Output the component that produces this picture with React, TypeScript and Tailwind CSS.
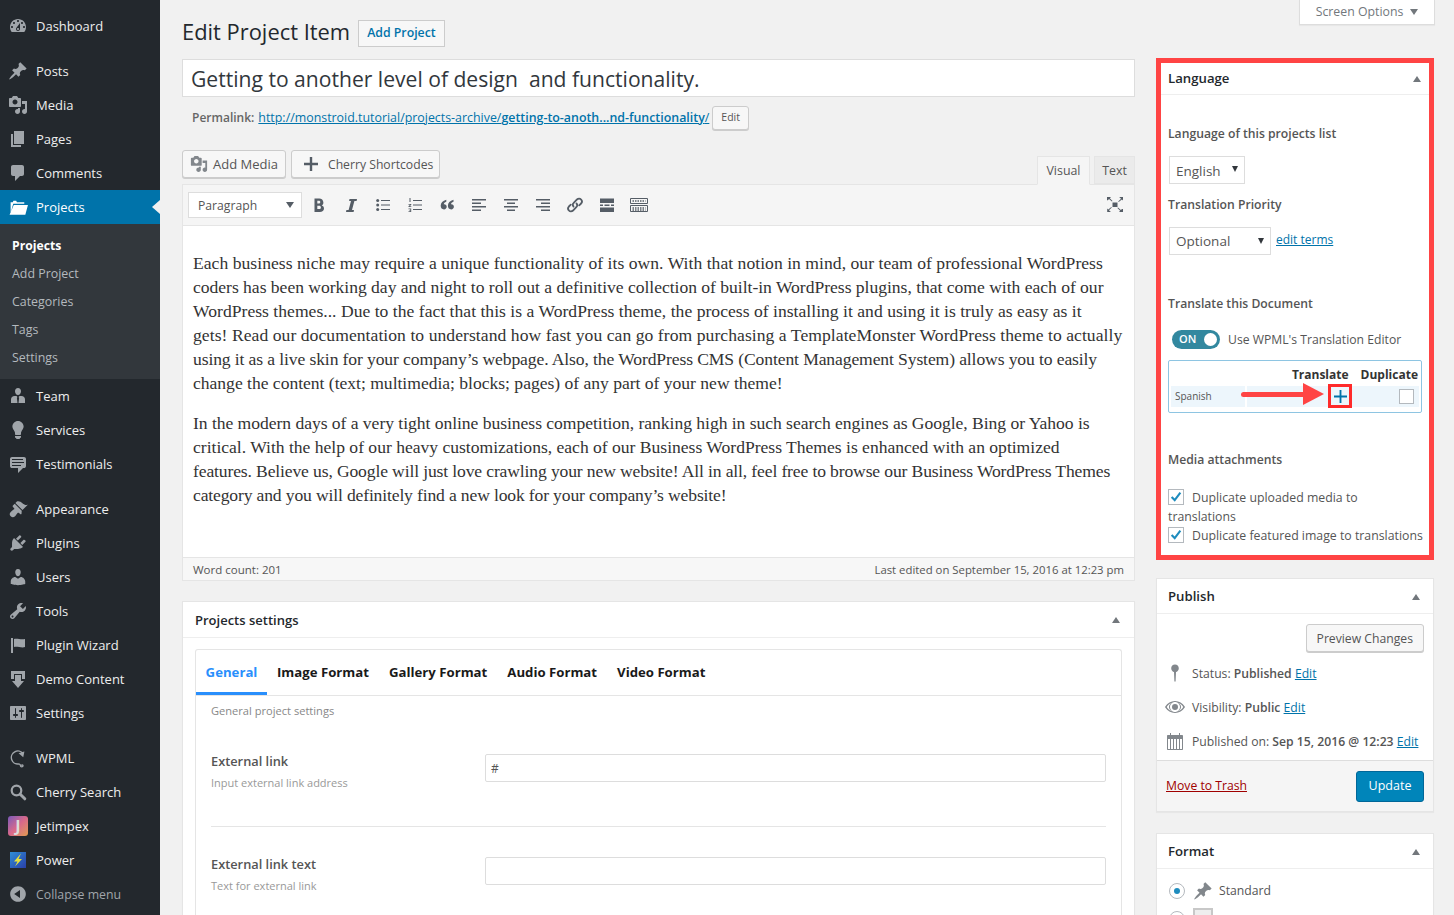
import React from "react";

const d: Record<string, string> = {
  dashboard: "M3.76 16h12.48c1.1-1.37 1.76-3.11 1.76-5 0-4.42-3.58-8-8-8s-8 3.58-8 8c0 1.89.66 3.63 1.76 5zM10 4c.55 0 1 .45 1 1s-.45 1-1 1-1-.45-1-1 .45-1 1-1zM6 6c.55 0 1 .45 1 1s-.45 1-1 1-1-.45-1-1 .45-1 1-1zm8 0c.55 0 1 .45 1 1s-.45 1-1 1-1-.45-1-1 .45-1 1-1zm-5.37 5.55L12 7v6c0 1.1-.9 2-2 2s-2-.9-2-2c0-.57.24-1.08.63-1.45zM4 10c.55 0 1 .45 1 1s-.45 1-1 1-1-.45-1-1 .45-1 1-1zm12 0c.55 0 1 .45 1 1s-.45 1-1 1-1-.45-1-1 .45-1 1-1zm-5 3c0-.55-.45-1-1-1s-1 .45-1 1 .45 1 1 1 1-.45 1-1z",
  post: "M10.44 3.02l1.82-1.82 6.36 6.35-1.83 1.82c-1.05-.68-2.48-.57-3.41.36l-.75.75c-.92.93-1.04 2.35-.35 3.41l-1.83 1.82-2.41-2.41-2.8 2.79c-.42.42-3.38 2.71-3.8 2.29s1.86-3.39 2.28-3.81l2.79-2.79L4.1 9.36l1.83-1.82c1.05.69 2.48.57 3.4-.36l.75-.75c.93-.92 1.05-2.35.36-3.41z",
  media: "M13 11V4c0-.55-.45-1-1-1h-1.67L9 1H5L3.67 3H2c-.55 0-1 .45-1 1v7c0 .55.45 1 1 1h10c.55 0 1-.45 1-1zM7 4.5c1.38 0 2.5 1.12 2.5 2.5S8.38 9.5 7 9.5 4.5 8.38 4.5 7 5.62 4.5 7 4.5zM14 6h5v10.5c0 1.38-1.12 2.5-2.5 2.5S14 17.88 14 16.5s1.12-2.5 2.5-2.5c.17 0 .34.02.5.05V9h-3V6zm-4 8.05V13h2v3.5c0 1.38-1.12 2.5-2.5 2.5S7 17.88 7 16.5 8.12 14 9.5 14c.17 0 .34.02.5.05z",
  page: "M6 15V2h10v13H6zm-1 1h8v2H3V5h2v11z",
  comments: "M5 2h9c1.1 0 2 .9 2 2v7c0 1.1-.9 2-2 2h-2l-5 5v-5H5c-1.1 0-2-.9-2-2V4c0-1.1.9-2 2-2z",
  folder: "M2.500 5h2l.7-1.500h2.600L8.500 5h7v1.500H5L2.500 15zM5.500 7.500H19L16.500 17H1.500z",
  team: "M10 2c1.900 0 3 1.500 3 3.200S11.900 9 10 9 7 7 7 5.200 8.100 2 10 2zM6.500 10h2l.9 1-.5 1 .6 5H3v-3.500c0-2 1.500-3.500 3.500-3.500zm7 0c2 0 3.500 1.500 3.500 3.500V17h-6.500l.6-5-.5-1 .9-1z",
  bulb: "M10 1c3.11 0 5.63 2.52 5.63 5.62 0 1.84-2.03 4.58-2.03 4.58-.33.44-.6 1.25-.6 1.8v1c0 .55-.45 1-1 1H8c-.55 0-1-.45-1-1v-1c0-.55-.27-1.36-.6-1.8 0 0-2.02-2.74-2.02-4.58C4.38 3.52 6.89 1 10 1zM7 16.87V16h6v.87c0 .62-.13 1.13-.75 1.13H12c0 .62-.4 1-1.02 1h-2c-.61 0-.98-.38-.98-1h-.25c-.62 0-.75-.51-.75-1.13z",
  testimonial: "M4 3h12c.55 0 1.02.2 1.41.59S18 4.45 18 5v7c0 .55-.2 1.02-.59 1.41S16.55 14 16 14h-1l-5 5v-5H4c-.55 0-1.02-.2-1.41-.59S2 12.55 2 12V5c0-.55.2-1.02.59-1.41S3.45 3 4 3zm11 2H4v1h11V5zm1 3H4v1h12V8zm-3 3H4v1h9v-1z",
  appearance: "M14.48 11.06L7.41 3.99l1.5-1.5c.5-.56 2.3-.47 3.51.32 1.21.8 1.43 1.28 2.91 2.1 1.18.64 2.45 1.26 4.45.85zm-.71.71L6.7 4.78l-1.77 1.7c-.39.39-.39 1.02 0 1.41l1.06 1.06c.39.39.39 1.03 0 1.42-.6.6-1.43 1.11-2.21 1.69-.35.26-.7.53-1.01.84-1.43 1.43-1.4 3.04-.07 4.37s2.94 1.36 4.37-.07c.31-.31.58-.66.84-1.01.58-.78 1.09-1.61 1.69-2.21.39-.39 1.03-.39 1.42 0l1.06 1.06c.39.39 1.02.39 1.41 0z",
  plugins: "M13.11 4.36L9.87 7.6 8 5.73l3.24-3.24c.35-.34 1.05-.2 1.56.32.52.51.66 1.21.31 1.55zm-8 1.77l.91-1.12 9.01 9.01-1.19.84c-.71.71-2.63 1.16-3.82 1.16H6.14L4.9 17.26c-.59.59-1.54.59-2.12 0-.59-.58-.59-1.53 0-2.12l1.24-1.24v-3.88c0-1.13.4-3.19 1.09-3.89zm7.26 3.97l3.24-3.24c.34-.35 1.04-.21 1.55.31.52.51.66 1.21.31 1.55l-3.24 3.25z",
  users: "M10 9.25c-2.27 0-2.73-3.44-2.73-3.44C7 4.02 7.82 2 9.97 2c2.16 0 2.98 2.02 2.71 3.81 0 0-.41 3.44-2.68 3.44zm0 2.57L12.72 10c2.39 0 4.52 2.33 4.52 4.53v2.49s-3.65 1.13-7.24 1.13c-3.65 0-7.24-1.13-7.24-1.13v-2.49c0-2.25 1.94-4.48 4.47-4.48z",
  tools: "M16.68 9.77c-1.34 1.34-3.3 1.67-4.95.99l-5.41 6.52c-.99.99-2.59.99-3.58 0s-.99-2.59 0-3.57l6.52-5.42c-.68-1.65-.35-3.61.99-4.95 1.28-1.28 3.12-1.62 4.72-1.06l-2.89 2.89 2.82 2.82 2.86-2.87c.53 1.58.18 3.39-1.08 4.65zM3.81 16.21c.4.39 1.04.39 1.43 0 .4-.4.4-1.04 0-1.43-.39-.4-1.03-.4-1.43 0-.39.39-.39 1.03 0 1.43z",
  flag: "M5 18V3H3v15h2zm1-6V4c3-1 7 1 11 0v8c-3 1.27-8-1-11 0z",
  demo: "M3 2h14v8h-3V5H6v5H3zM7 6h6v6h3l-6 7-6-7h3z",
  settings: "M18 16V4c0-.55-.45-1-1-1H3c-.55 0-1 .45-1 1v12c0 .55.45 1 1 1h14c.55 0 1-.45 1-1zM8 11h1c.55 0 1 .45 1 1s-.45 1-1 1H8v1.5c0 .28-.22.5-.5.5s-.5-.22-.5-.5V13H6c-.55 0-1-.45-1-1s.45-1 1-1h1V5.5c0-.28.22-.5.5-.5s.5.22.5.5V11zm5-2h-1c-.55 0-1-.45-1-1s.45-1 1-1h1V5.5c0-.28.22-.5.5-.5s.5.22.5.5V7h1c.55 0 1 .45 1 1s-.45 1-1 1h-1v5.5c0 .28-.22.5-.5.5s-.5-.22-.5-.5V9z",
  collapse: "M10 2.16c4.33 0 7.84 3.51 7.84 7.84s-3.51 7.84-7.84 7.84S2.16 14.33 2.16 10 5.71 2.16 10 2.16zm2 11.72V6.12L6.18 9.97z",
  pin: "M10 1.500c2.200 0 3.800 1.600 3.800 3.700S12.300 8.700 11 9l-.4 9.500H9.400L9 9C7.700 8.700 6.200 7.300 6.200 5.200S7.800 1.500 10 1.500z",
  eye: "M19.700 9.400C17.700 6 14 3.900 10 3.900S2.300 6 .3 9.400L0 10l.3.600c2 3.400 5.700 5.500 9.700 5.500s7.700-2.100 9.700-5.500l.3-.600-.3-.600zM10 5c2.800 0 5 2.200 5 5s-2.200 5-5 5-5-2.200-5-5 2.200-5 5-5zm0 2a3 3 0 100 6 3 3 0 000-6zM1.700 10C3 7.900 4.900 6.400 7.100 5.600 5.200 6.600 4 8.200 4 10s1.200 3.400 3.100 4.400C4.900 13.600 3 12.100 1.700 10zm11.200 4.400C14.800 13.400 16 11.800 16 10s-1.200-3.400-3.100-4.400c2.200.8 4.100 2.300 5.400 4.400-1.300 2.100-3.200 3.600-5.400 4.400z",
  calendar: "M3 4h2V2h1v2h8V2h1v2h2c.6 0 1 .4 1 1v13c0 .6-.4 1-1 1H3c-.6 0-1-.4-1-1V5c0-.6.4-1 1-1zm0 4v10h2V8zm3 0v10h2V8zm3 0v10h2V8zm3 0v10h2V8zm3 0v10h2V8z",
};

function I({ n, className = "" }: { n: string; className?: string }) {
  return (
    <svg viewBox="0 0 20 20" className={className} fill="currentColor">
      <path d={d[n]} />
    </svg>
  );
}

function MenuItem({ icon, label, active = false }: { icon: React.ReactNode; label: string; active?: boolean }) {
  return (
    <div className={`relative flex h-[34px] items-center ${active ? "bg-[#0073aa] text-white" : "text-[#eeeeee]"}`}>
      <div className={`flex w-[36px] shrink-0 items-center justify-center ${active ? "text-white" : "text-[#a0a5aa]"}`}>{icon}</div>
      <span className="text-[13px] leading-[18px]">{label}</span>
      {active && <div className="absolute right-0 top-[10px] h-0 w-0 border-y-[7px] border-r-[8px] border-y-transparent border-r-[#f1f1f1]" />}
    </div>
  );
}

const ic = "h-[20px] w-[20px]";

function Sidebar() {
  const top = (n: string) => <I n={n} className={ic} />;
  return (
    <aside className="h-[915px] w-[160px] shrink-0 overflow-hidden bg-[#23282d] pt-[9px]">
      <MenuItem icon={top("dashboard")} label="Dashboard" />
      <div className="h-[11px]" />
      <MenuItem icon={top("post")} label="Posts" />
      <MenuItem icon={top("media")} label="Media" />
      <MenuItem icon={top("page")} label="Pages" />
      <MenuItem icon={top("comments")} label="Comments" />
      <MenuItem icon={<I n="folder" className="h-[21px] w-[21px]" />} label="Projects" active />
      <div className="flex flex-col bg-[#32373c] pb-[7px] pt-[8px] text-[12.4px]">
        <div className="flex h-[28px] items-center pl-[12px] text-[12.2px] font-bold text-white">Projects</div>
        {["Add Project", "Categories", "Tags", "Settings"].map((s) => (
          <div key={s} className="flex h-[28px] items-center pl-[12px] text-[#b4b9be]">{s}</div>
        ))}
      </div>
      <MenuItem icon={top("team")} label="Team" />
      <MenuItem icon={top("bulb")} label="Services" />
      <MenuItem icon={top("testimonial")} label="Testimonials" />
      <div className="h-[11px]" />
      <MenuItem icon={top("appearance")} label="Appearance" />
      <MenuItem icon={top("plugins")} label="Plugins" />
      <MenuItem icon={top("users")} label="Users" />
      <MenuItem icon={top("tools")} label="Tools" />
      <MenuItem icon={top("flag")} label="Plugin Wizard" />
      <MenuItem icon={top("demo")} label="Demo Content" />
      <MenuItem icon={top("settings")} label="Settings" />
      <div className="h-[11px]" />
      <MenuItem
        icon={
          <svg viewBox="0 0 20 20" className={ic} fill="none" stroke="currentColor" strokeWidth="1.4">
            <path d="M15 5.500A6.500 6.500 0 1011 15.900M11 15.900c.8.300 1.500 1.100 1.500 1.900 0 1.400 2.500 1.400 2.500 0 0-.9-1.300-1-1.500-.2" />
            <path d="M15.500 4.500l-3.500 1 2.800 2.500z" fill="currentColor" />
          </svg>
        }
        label="WPML"
      />
      <MenuItem
        icon={
          <svg viewBox="0 0 20 20" className={ic} fill="none" stroke="currentColor">
            <circle cx="8.500" cy="8.500" r="4.800" strokeWidth="2.200" />
            <path d="M12.200 12.200l4.600 4.600" strokeWidth="3" strokeLinecap="round" />
          </svg>
        }
        label="Cherry Search"
      />
      <MenuItem
        icon={
          <div className="flex h-[20px] w-[20px] items-center justify-center rounded-[3px] bg-gradient-to-br from-[#7a56b8] via-[#d8688a] to-[#e09a4a] text-[16px] font-bold leading-none text-[#dcdcdc]">J</div>
        }
        label="Jetimpex"
      />
      <MenuItem
        icon={
          <svg viewBox="0 0 16 16" className="h-[16px] w-[16px]">
            <defs>
              <linearGradient id="pw" x1="0" y1="0" x2="1" y2="1">
                <stop offset="0" stopColor="#2f8fd8" />
                <stop offset="1" stopColor="#2a3fa8" />
              </linearGradient>
            </defs>
            <rect width="16" height="16" fill="url(#pw)" />
            <path d="M11 1.500L4 9.500h3.500L5 14.500l7-7.500H8.500z" fill="#e8e23c" />
          </svg>
        }
        label="Power"
      />
      <div className="flex h-[34px] items-center text-[#a0a5aa]">
        <div className="flex w-[36px] justify-center"><I n="collapse" className={ic} /></div>
        <span className="pt-[2px] text-[12.3px]">Collapse menu</span>
      </div>
    </aside>
  );
}

function Caret() {
  return <div className="h-0 w-0 border-x-[4px] border-b-[6px] border-x-transparent border-b-[#72777c]" />;
}

function Ed({ children }: { children: React.ReactNode }) {
  return <div className="flex h-[32px] w-[32px] items-center justify-center text-[#555d66]">{children}</div>;
}

function Toolbar() {
  const s = "h-[20px] w-[20px]";
  return (
    <div className="flex h-[42px] items-center border-y border-[#e5e5e5] bg-[#f5f5f5] pl-[5px] pr-[10px]">
      <div className="mr-[1px] flex h-[26px] w-[114px] items-center justify-between border border-[#dddddd] bg-white pl-[9px] pr-[7px] text-[12.2px] text-[#555555]">
        <span className="pt-[2px]">Paragraph</span>
        <div className="h-0 w-0 border-x-[4px] border-t-[6px] border-x-transparent border-t-[#555d66]" />
      </div>
      <Ed><svg viewBox="0 0 20 20" className={s} fill="currentColor"><path d="M5.500 3.500v13.500h5.300c2.500 0 4.200-1.300 4.200-3.500 0-1.500-.8-2.600-2.200-3 1-.5 1.600-1.500 1.600-2.700 0-2.900-1.900-4.300-4.200-4.300zm2.800 2.200h1.600c.9 0 1.400.6 1.400 1.400s-.5 1.500-1.400 1.500H8.300zm0 5h1.800c1.100 0 1.800.6 1.800 1.700s-.7 1.700-1.800 1.700H8.300z" /></svg></Ed>
      <Ed><svg viewBox="0 0 20 20" className={s} fill="currentColor"><path d="M8.500 4H16l-.4 2h-2.200l-2.400 9h2l-.4 2H5l.4-2h2.200l2.400-9H8.100z" /></svg></Ed>
      <Ed><svg viewBox="0 0 20 20" className={s} fill="currentColor"><path d="M8 5h9v1H8zm0 4.500h9v1H8zM8 14h9v1H8z" /><circle cx="4.700" cy="5.500" r="1.500" /><circle cx="4.700" cy="10" r="1.500" /><circle cx="4.700" cy="14.500" r="1.500" /></svg></Ed>
      <Ed><svg viewBox="0 0 20 20" className={s} fill="currentColor"><path d="M8 5h9v1H8zm0 4.500h9v1H8zM8 14h9v1H8zM4.500 3h1v4h-1zM3.500 9h2.800v.8L4.700 11.200h1.600v.8H3.500v-.7l1.700-1.500H3.500zM3.500 13.500h2.700v3.500H3.500v-.7h1.800v-.7H4.200v-.7h1.100v-.6H3.500z" /></svg></Ed>
      <Ed><svg viewBox="0 0 20 20" className={s} fill="currentColor"><path d="M9.300 4.700v2.100c-1.600.6-2.400 1.400-2.500 2.500h.4c1.500 0 2.500 1 2.500 2.500s-1.100 2.600-2.700 2.600C5 14.400 3.700 13 3.700 10.800c0-3 2-5.200 5.600-6.100zm7.200 0v2.100c-1.600.6-2.400 1.400-2.500 2.500h.4c1.500 0 2.500 1 2.500 2.500s-1.100 2.600-2.700 2.600c-2 0-3.300-1.400-3.300-3.600 0-3 2-5.200 5.600-6.100z" /></svg></Ed>
      <Ed><svg viewBox="0 0 20 20" className={s} fill="currentColor"><path d="M3 4h14v1.500H3zm0 3.500h9V9H3zM3 11h14v1.500H3zm0 3.500h9V16H3z" /></svg></Ed>
      <Ed><svg viewBox="0 0 20 20" className={s} fill="currentColor"><path d="M3 4h14v1.500H3zm3 3.500h8V9H6zM3 11h14v1.500H3zm3 3.500h8V16H6z" /></svg></Ed>
      <Ed><svg viewBox="0 0 20 20" className={s} fill="currentColor"><path d="M3 4h14v1.500H3zm5 3.500h9V9H8zM3 11h14v1.500H3zm5 3.500h9V16H8z" /></svg></Ed>
      <Ed><svg viewBox="0 0 20 20" className={s} fill="none" stroke="currentColor" strokeWidth="1.800" strokeLinecap="round"><path d="M8.500 11.500c-1-1-1-2.300 0-3.300l3.500-3.700c1.200-1.200 3-1.200 4.100 0s1 2.900 0 4l-1.900 1.800" /><path d="M11.500 8.500c1 1 1 2.300 0 3.300l-3.500 3.700c-1.200 1.200-3 1.200-4.100 0s-1-2.900 0-4l1.900-1.800" /></svg></Ed>
      <Ed><svg viewBox="0 0 20 20" className={s} fill="currentColor"><path d="M3 3.500h14V8H3zM3 9.500h3V11H3zm4.500 0h5V11h-5zm6.500 0h3V11h-3zM3 12.500h14V17H3z" /></svg></Ed>
      <Ed><svg viewBox="0 0 20 20" className={s} fill="none" stroke="currentColor"><path d="M1.500 3.500h17v5h-17zM1.500 10.500h17v6h-17z" /><path d="M3.500 6h13M3.500 13h13M3.500 15h13" strokeDasharray="1.500 1" strokeWidth="1.300" /></svg></Ed>
      <div className="ml-auto mr-[1px] flex h-[16px] w-[16px] items-center justify-center text-[#555d66]">
        <svg viewBox="0 0 16 16" className="h-[16px] w-[16px]" fill="currentColor">
          <path d="M5.500 5.500h5v4.500h-5z" />
          <path d="M0 0h4L2.800 1.200 5.500 4l-.6.600L2 2 .9 3.200H0zM16 0v3.500L14.900 2.400 11.700 5l-.5-.6 2.800-2.700L12.800.5 12 0zM0 15h.2V11.500l1.100 1.100 3-2.600.5.600-2.800 2.700L3.300 14.500 4 15zM16 15h-4l1.200-1.200-2.800-2.900.6-.5 2.900 2.700 1.100-1.200h1z" />
        </svg>
      </div>
    </div>
  );
}

const para1: [string, string][] = [
  ["Each business niche may require a unique functionality of its own. With that notion in mind, our team of professional WordPress", "tracking-[0.03px]"],
  ["coders has been working day and night to roll out a definitive collection of built-in WordPress plugins, that come with each of our", "tracking-[-0.03px]"],
  ["WordPress themes... Due to the fact that this is a WordPress theme, the process of installing it and using it is truly as easy as it", "tracking-[0.015px]"],
  ["gets! Read our documentation to understand how fast you can go from purchasing a TemplateMonster WordPress theme to actually", "tracking-[0.05px]"],
  ["using it as a live skin for your company’s webpage. Also, the WordPress CMS (Content Management System) allows you to easily", "tracking-[-0.12px]"],
  ["change the content (text; multimedia; blocks; pages) of any part of your new theme!", "tracking-[-0.024px]"],
];
const para2: [string, string][] = [
  ["In the modern days of a very tight online business competition, ranking high in such search engines as Google, Bing or Yahoo is", "tracking-[-0.047px]"],
  ["critical. With the help of our heavy customizations, each of our Business WordPress Themes is enhanced with an optimized", "tracking-[-0.017px]"],
  ["features. Believe us, Google will just love crawling your new website! All in all, feel free to browse our Business WordPress Themes", "tracking-[-0.143px]"],
  ["category and you will definitely find a new look for your company’s website!", "tracking-[-0.156px]"],
];

function Main() {
  return (
    <main className="w-[953px] shrink-0">
      <div className="flex h-[59px] items-end pb-[13px]">
        <h1 className="text-[21.9px] leading-[29px] text-[#23282d]">Edit Project Item</h1>
        <div className="ml-[8px] flex h-[27px] translate-y-px items-center border border-[#cccccc] bg-[#f7f7f7] px-[8px] text-[12.3px] font-semibold text-[#0073aa]">Add Project</div>
      </div>
      <div className="flex h-[38px] items-center border border-[#dddddd] bg-white pl-[8px] pt-[2px] text-[21.1px] text-[#32373c]">
        <span className="whitespace-pre">Getting to another level of design  and functionality.</span>
      </div>
      <div className="flex h-[27px] items-center whitespace-nowrap pl-[10px] pt-[15px] text-[12.4px] text-[#666666]">
        <span className="text-[12px] font-semibold">Permalink:</span>
        <span className="ml-[4px] text-[#0073aa] underline">http://monstroid.tutorial/projects-archive/<span className="font-semibold">getting-to-anoth...nd-functionality</span>/</span>
        <div className="ml-[3px] flex h-[24px] items-center rounded-[3px] border border-[#cccccc] bg-[#f7f7f7] px-[8px] text-[10.5px] text-[#555555] shadow-[0_1px_0_#cccccc]">Edit</div>
      </div>
      <div className="mt-[26px] flex h-[34px] items-start">
        <div className="flex h-[28px] items-center rounded-[3px] border border-[#cccccc] bg-[#f7f7f7] pl-[7px] pr-[7px] text-[13px] text-[#555555] shadow-[0_1px_0_#cccccc]">
          <I n="media" className="mr-[5px] h-[18px] w-[18px] text-[#82878c]" />
          <span className="pt-px">Add Media</span>
        </div>
        <div className="ml-[5px] flex h-[28px] items-center rounded-[3px] border border-[#cccccc] bg-[#f7f7f7] pl-[12px] pr-[6px] text-[12.2px] text-[#555555] shadow-[0_1px_0_#cccccc]">
          <svg viewBox="0 0 14 14" className="mr-[10px] h-[14px] w-[14px]" fill="#555d66"><path d="M5.800 0h2.400v5.800H14v2.400H8.200V14H5.800V8.200H0V5.800h5.800z" /></svg>
          <span className="pt-[2px]">Cherry Shortcodes</span>
        </div>
        <div className="ml-auto flex">
          <div className="-mb-px mt-[6px] flex h-[29px] w-[53px] items-center justify-center border border-[#e5e5e5] border-b-[#f5f5f5] bg-[#f5f5f5] pt-px text-[12.4px] text-[#555555]">Visual</div>
          <div className="ml-[4px] mt-[6px] flex h-[28px] w-[41px] items-center justify-center border border-[#e5e5e5] bg-[#ebebeb] pt-[2px] text-[12.4px] text-[#555555]">Text</div>
        </div>
      </div>
      <div className="border-x border-[#e5e5e5] bg-white">
        <Toolbar />
        <div className="h-[331px] pl-[10px] pt-[25px] font-['Liberation_Serif',serif] text-[17.6px] leading-[24px] text-[#333333]">
          {para1.map(([l, t]) => <div key={l} className={`whitespace-nowrap ${t}`}>{l}</div>)}
          <div className="h-[16px]" />
          {para2.map(([l, t]) => <div key={l} className={`whitespace-nowrap ${t}`}>{l}</div>)}
        </div>
        <div className="flex h-[24px] items-center justify-between border-y border-[#e5e5e5] bg-[#f7f7f7] px-[10px] pt-px text-[11.5px] text-[#555555]">
          <span>Word count: 201</span>
          <span className="text-[11.35px]">Last edited on September 15, 2016 at 12:23 pm</span>
        </div>
      </div>
      <div className="mt-[20px] h-[400px] border border-[#e5e5e5] bg-white shadow-[0_1px_1px_rgba(0,0,0,0.04)]">
        <div className="flex h-[36px] items-center justify-between border-b border-[#eeeeee] pl-[12px] pr-[14px] text-[13px] font-semibold text-[#23282d]">
          <span className="pt-[2px]">Projects settings</span>
          <Caret />
        </div>
        <div className="mx-[12px] mt-[11px] h-[400px] rounded-t-[3px] border-x border-t border-[#e5e5e5]">
          <div className="flex h-[46px] items-stretch border-b border-[#e5e5e5] text-[13.2px] font-bold text-[#1a1a1a]">
            <div className="flex w-[71px] items-center justify-center border-b-[3px] border-[#298ffc] pt-[3px] text-[#298ffc]">General</div>
            <div className="flex items-center pl-[10px]">Image Format</div>
            <div className="flex items-center pl-[20px]">Gallery Format</div>
            <div className="flex items-center pl-[20px]">Audio Format</div>
            <div className="flex items-center pl-[20px]">Video Format</div>
          </div>
          <div className="px-[15px]">
            <div className="pt-[7px] text-[11.1px] leading-[16px] text-[#888888]">General project settings</div>
            <div className="mt-[35px] flex items-start">
              <div className="w-[274px]">
                <div className="text-[12.8px] font-semibold leading-[14px] text-[#555555]">External link</div>
                <div className="mt-[7px] text-[11px] leading-[16px] text-[#999999]">Input external link address</div>
              </div>
              <div className="flex h-[28px] flex-1 items-center rounded-[2px] border border-[#dddddd] pl-[5px] pt-px text-[12px] text-[#555555]">#</div>
            </div>
            <div className="mt-[35px] border-t border-[#e5e5e5]" />
            <div className="mt-[30px] flex items-start">
              <div className="w-[274px]">
                <div className="text-[12.8px] font-semibold leading-[14px] text-[#555555]">External link text</div>
                <div className="mt-[7px] text-[11px] leading-[16px] text-[#999999]">Text for external link</div>
              </div>
              <div className="h-[28px] flex-1 rounded-[2px] border border-[#dddddd]" />
            </div>
          </div>
        </div>
      </div>
    </main>
  );
}

function Box({ title, children }: { title: string; children: React.ReactNode }) {
  return (
    <div className="border border-[#e5e5e5] bg-white shadow-[0_1px_1px_rgba(0,0,0,0.04)]">
      <div className="flex h-[35px] items-center justify-between border-b border-[#eeeeee] pl-[11px] pr-[13px] pt-px text-[13.2px] font-semibold text-[#23282d]">
        <span>{title}</span>
        <Caret />
      </div>
      {children}
    </div>
  );
}

function Check() {
  return (
    <span className="mr-[8px] inline-flex h-[16px] w-[16px] items-center justify-center border border-[#b4b9be] bg-white align-[-3px]">
      <svg viewBox="0 0 16 16" className="h-[16px] w-[16px]" fill="none" stroke="#1e8cbe" strokeWidth="2.400"><path d="M3 8l3.500 3.500L13 3" /></svg>
    </span>
  );
}

function Right() {
  return (
    <aside className="ml-[21px] w-[278px] shrink-0">
      <div className="mt-[58px] h-[502px] border-[5px] border-[#ff4444] bg-white text-[12.2px] text-[#555555]">
        <div className="flex h-[32px] items-center justify-between border-b border-[#eeeeee] pl-[7px] pr-[8px] text-[13.2px] font-semibold text-[#23282d]">
          <span>Language</span>
          <Caret />
        </div>
        <div className="pl-[7px]">
          <div className="pt-[31px] font-semibold leading-[16px]">Language of this projects list</div>
          <div className="ml-px mt-[14px] flex h-[28px] w-[76px] items-center justify-between border border-[#dddddd] pl-[6px] pr-[6px] text-[13.5px]">
            <span className="pt-[2px]">English</span>
            <div className="mb-[2px] h-0 w-0 border-x-[3px] border-t-[6px] border-x-transparent border-t-[#32373c]" />
          </div>
          <div className="mt-[13px] font-semibold leading-[16px]">Translation Priority</div>
          <div className="mt-[14px] flex items-center">
            <div className="ml-px flex h-[28px] w-[102px] items-center justify-between border border-[#dddddd] pl-[6px] pr-[6px] text-[13.5px]">
              <span>Optional</span>
              <div className="h-0 w-0 border-x-[3px] border-t-[6px] border-x-transparent border-t-[#32373c]" />
            </div>
            <span className="mb-[2px] ml-[5px] text-[12px] text-[#0073aa] underline">edit terms</span>
          </div>
          <div className="mt-[41px] font-semibold leading-[16px]">Translate this Document</div>
          <div className="mt-[18px] flex items-center">
            <div className="relative ml-[4px] flex h-[19px] w-[48px] items-center rounded-full bg-[#32889f] pl-[7px] text-[11px] font-semibold text-white">
              ON
              <div className="absolute right-[3px] top-[3px] h-[13px] w-[13px] rounded-full bg-white" />
            </div>
            <span className="ml-[8px] pt-px">Use WPML's Translation Editor</span>
          </div>
          <div className="relative mr-[7px] mt-[11px] h-[53px] rounded-[2px] border border-[#8ec5e2] px-[2px]">
            <div className="flex h-[25px] items-center justify-end pr-[1px] pt-[2px] text-[12px] leading-none text-[#333333]">
              <span className="mr-[12px] font-bold">Translate</span>
              <span className="font-bold">Duplicate</span>
            </div>
            <div className="flex h-[21px] items-stretch gap-[2px] text-[10px]">
              <div className="flex w-[74px] items-center bg-[#edf6fc] pl-[4px]">Spanish</div>
              <div className="flex flex-1 items-center justify-end bg-[#edf6fc]">
                <div className="mr-[5px] h-[15px] w-[15px] border border-[#b4b9be] bg-white" />
              </div>
            </div>
            <div className="absolute left-[72px] top-[22px] flex items-center">
              <div className="h-[5px] w-[62px] rounded-l-full bg-[#ff4444]" />
              <div className="h-0 w-0 border-y-[11px] border-l-[21px] border-y-transparent border-l-[#ff4444]" />
            </div>
            <div className="absolute left-[159px] top-[23px] flex h-[24px] w-[24px] items-center justify-center border-[3px] border-[#ff2a2a]">
              <svg viewBox="0 0 14 14" className="h-[13px] w-[13px]" fill="#0073aa"><path d="M6 0h2v6h6v2H8v6H6V8H0V6h6z" /></svg>
            </div>
          </div>
          <div className="mt-[39px] font-semibold leading-[16px]">Media attachments</div>
          <div className="mt-[20px] whitespace-nowrap text-[12.3px] leading-[19px]">
            <div><Check />Duplicate uploaded media to</div>
            <div>translations</div>
            <div><Check />Duplicate featured image to translations</div>
          </div>
        </div>
      </div>
      <div className="mt-[18px] text-[12.2px] text-[#555555]">
        <Box title="Publish">
          <div className="flex justify-end pr-[9px] pt-[10px]">
            <div className="flex h-[28px] items-center rounded-[3px] border border-[#cccccc] bg-[#f7f7f7] px-[10px] pt-[2px] text-[#555555] shadow-[0_1px_0_#cccccc]">Preview Changes</div>
          </div>
          <div className="mt-[4px] flex h-[34px] items-center whitespace-nowrap pl-[8px]"><I n="pin" className="h-[20px] w-[20px] text-[#82878c]" /><span className="ml-[7px] pt-[2px]">Status: <b className="font-semibold">Published</b> <span className="text-[#0073aa] underline">Edit</span></span></div>
          <div className="flex h-[34px] items-center whitespace-nowrap pl-[8px]"><I n="eye" className="h-[20px] w-[20px] text-[#82878c]" /><span className="ml-[7px] pt-[2px]">Visibility: <b className="font-semibold">Public</b> <span className="text-[#0073aa] underline">Edit</span></span></div>
          <div className="flex h-[34px] items-center whitespace-nowrap pl-[8px]"><I n="calendar" className="h-[20px] w-[20px] text-[#82878c]" /><span className="ml-[7px] pt-[2px]">Published on: <b className="font-semibold">Sep 15, 2016 @ 12:23</b> <span className="text-[#0073aa] underline">Edit</span></span></div>
          <div className="mt-[2px] flex h-[51px] items-center justify-between border-t border-[#dddddd] bg-[#f5f5f5] pl-[9px] pr-[9px]">
            <span className="text-[#a00000] underline">Move to Trash</span>
            <div className="flex h-[31px] w-[68px] items-center justify-center rounded-[3px] border border-[#006799] bg-[#0085ba] text-[12.5px] text-white">Update</div>
          </div>
        </Box>
        <div className="h-[21px]" />
        <Box title="Format">
          <div className="flex items-center pl-[12px] pt-[12px]">
            <span className="flex h-[16px] w-[16px] items-center justify-center rounded-full border border-[#b4b9be]"><span className="h-[6px] w-[6px] rounded-full bg-[#1e8cbe]" /></span>
            <I n="post" className="ml-[8px] h-[20px] w-[20px] text-[#82878c]" />
            <span className="ml-[6px]">Standard</span>
          </div>
          <div className="mt-[7px] flex items-start pl-[12px]">
            <span className="mt-[3px] h-[16px] w-[16px] rounded-full border border-[#b4b9be]" />
            <span className="ml-[8px] h-[20px] w-[20px] border-[2px] border-[#c8c8c8] bg-[#eeeeee]" />
            <span className="ml-[6px] pt-[4px]">Image</span>
          </div>
        </Box>
      </div>
    </aside>
  );
}

export default function App() {
  return (
    <div className="relative flex h-[915px] w-[1454px] overflow-hidden bg-[#f1f1f1] font-['Open_Sans',sans-serif] text-[#444444]">
      <Sidebar />
      <div className="ml-[22px]"><Main /></div>
      <Right />
      <div className="absolute right-[19px] top-0 flex h-[25px] w-[136px] items-center justify-center gap-[7px] border-x border-b border-[#dddddd] bg-white text-[12.3px] text-[#72777c] shadow-[0_1px_1px_rgba(0,0,0,0.04)]">
        <span>Screen Options</span>
        <div className="h-0 w-0 border-x-[4px] border-t-[6px] border-x-transparent border-t-[#72777c]" />
      </div>
    </div>
  );
}
